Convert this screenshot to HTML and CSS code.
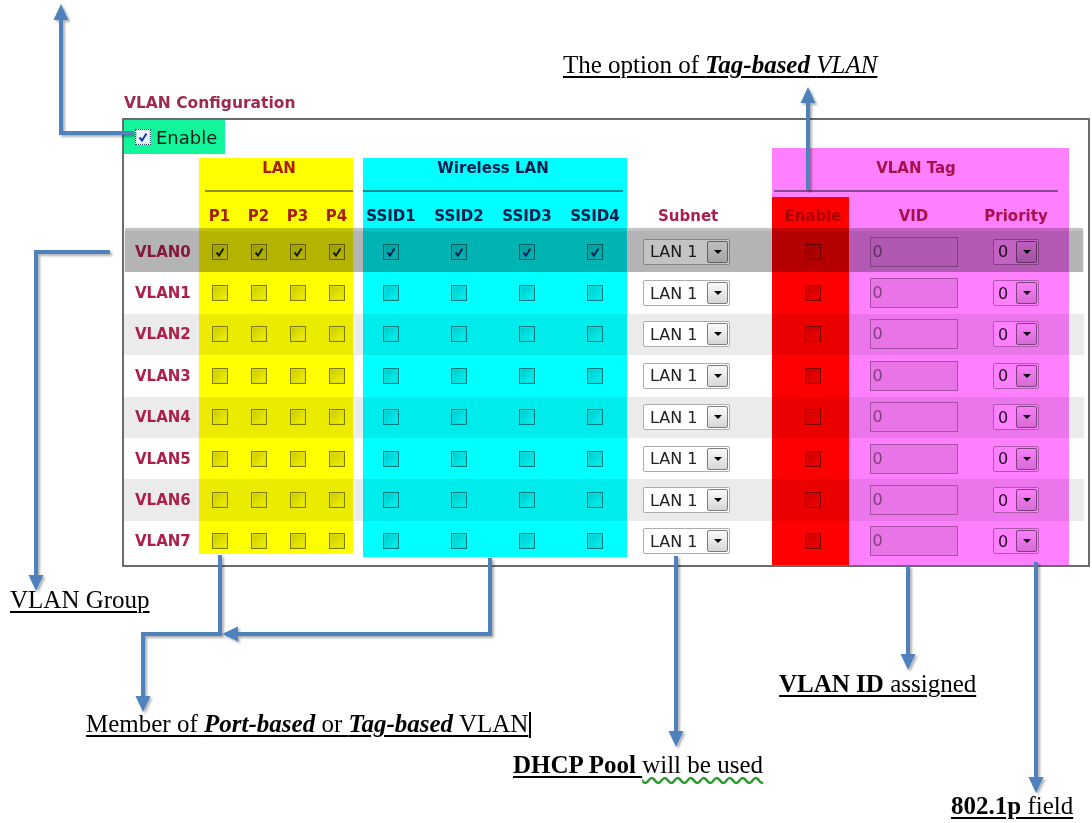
FILE: index.html
```html
<!DOCTYPE html>
<html lang="en">
<head>
<meta charset="UTF-8" />
<title>VLAN Configuration</title>
<link rel="stylesheet" href="styles.css">
</head>
<body>
<div class="page">

  <div class="title">VLAN Configuration</div>

  <div class="panel">
    <div class="enable-row">
      <label class="enable"><span class="cb on focus"><svg viewBox="0 0 14 14"><path d="M3.5 7.5 L6 10.5 L10.5 3.5"/></svg></span>Enable</label>
    </div>

    <div class="row group-row">
      <div class="grp g-lan">LAN</div>
      <div class="grp g-wlan">Wireless LAN</div>
      <div class="grp g-tag">VLAN Tag</div>
    </div>

    <div class="row head-row">
      <div></div>
      <div>P1</div>
      <div>P2</div>
      <div>P3</div>
      <div>P4</div>
      <div></div>
      <div>SSID1</div>
      <div>SSID2</div>
      <div>SSID3</div>
      <div>SSID4</div>
      <div class="subnet-h">Subnet</div>
      <div>Enable</div>
      <div>VID</div>
      <div>Priority</div>
      <div></div>
    </div>

    <div id="rows"></div>

    <!-- highlighter marks drawn over the form -->
    <div class="mark mark-sel"></div>
    <div class="mark mark-lan"></div>
    <div class="mark mark-wlan"></div>
    <div class="mark mark-tag"></div>
    <div class="mark mark-tagen"></div>
  </div>

  <div class="note n-option">The option of <b><i>Tag-based</i></b> <i>VLAN</i></div>
  <div class="note n-group">VLAN Group</div>
  <div class="note n-member">Member of <b><i>Port-based</i></b> or <b><i>Tag-based</i></b> VLAN<span class="caret"></span></div>
  <div class="note plain n-dhcp"><b class="ul">DHCP Pool </b><span class="wavy">will be used</span></div>
  <div class="note n-vid"><b>VLAN ID</b> assigned</div>
  <div class="note n-prio"><b>802.1p</b> field</div>

  <svg class="arrows" width="1092" height="823" viewBox="0 0 1092 823">
    <defs>
      <filter id="sh" x="-20%" y="-20%" width="140%" height="140%">
        <feDropShadow dx="2" dy="2" stdDeviation="1" flood-color="#000" flood-opacity="0.3"/>
      </filter>
    </defs>
    <g filter="url(#sh)">
      <path class="ln" d="M134 133 H61 V19"/>
      <polygon class="hd" points="53.5,20 68.5,20 61,4"/>

      <path class="ln" d="M808 190 V102"/>
      <polygon class="hd" points="800.5,103 815.5,103 808,87"/>

      <path class="ln" d="M110 252 H36 V576"/>
      <polygon class="hd" points="28.5,575 43.5,575 36,591"/>

      <path class="ln" d="M220 555 V634 H143 V697"/>
      <polygon class="hd" points="135.5,696 150.5,696 143,712"/>

      <path class="ln" d="M490 558 V634 H237"/>
      <polygon class="hd" points="238,626.5 238,641.5 222,634"/>

      <path class="ln" d="M676 556 V732"/>
      <polygon class="hd" points="668.5,731 683.5,731 676,747"/>

      <path class="ln" d="M908 566 V655"/>
      <polygon class="hd" points="900.5,654 915.5,654 908,670"/>

      <path class="ln" d="M1036 562 V778"/>
      <polygon class="hd" points="1028.5,777 1043.5,777 1036,793"/>
    </g>
  </svg>

</div>

<script>
  const check = '<svg viewBox="0 0 14 14"><path d="M3.5 7.5 L6 10.5 L10.5 3.5"/></svg>';

  function box(on) {
    return `<div class="c"><span class="cb${on ? ' on' : ''}">${on ? check : ''}</span></div>`;
  }

  const rows = document.getElementById('rows');
  for (let i = 0; i < 8; i++) {
    const on = i === 0;
    let html = `<div class="lbl">VLAN${i}</div>`;
    for (let p = 0; p < 4; p++) html += box(on);
    html += '<div></div>';
    for (let s = 0; s < 4; s++) html += box(on);
    html += '<div><span class="sel subnet">LAN 1<span class="btn"></span></span></div>';
    html += box(false);
    html += '<div class="c"><span class="vid">0</span></div>';
    html += '<div class="c"><span class="sel prio">0<span class="btn"></span></span></div>';
    html += '<div></div>';

    const tr = document.createElement('div');
    tr.className = 'row vrow';
    tr.innerHTML = html;
    rows.appendChild(tr);
  }
</script>

</body>
</html>
```

FILE: styles.css
```css
body {
  margin: 0;
  background: #fff;
  font-family: "DejaVu Sans", Verdana, sans-serif;
}
.page {
  position: relative;
  width: 1092px;
  height: 823px;
  overflow: hidden;
}
.title {
  margin: 94px 0 6px 124px;
  font-size: 15.5px;
  line-height: 18px;
  font-weight: bold;
  color: #9c2a50;
}
.panel {
  position: relative;
  margin-left: 122px;
  width: 960px;
  padding: 0 4px 3px 0;
  border: 2px solid #6b6b6b;
}

/* enable switch */
.enable-row {
  height: 34px;
}
.enable {
  display: flex;
  align-items: center;
  gap: 5px;
  width: 101px;
  height: 34px;
  padding-left: 11px;
  box-sizing: border-box;
  background: #12f59a;
  font-size: 18px;
  color: #0d1f16;
}

/* grid rows */
.row {
  display: grid;
  grid-template-columns: 76px repeat(4, 39px) 1px repeat(4, 68px) 149px 70px 131px 74px 31px;
  font-size: 15px;
  font-weight: bold;
  color: #a81f4c;
}
.group-row {
  height: 38px;
}
.grp {
  height: 38px;
  box-sizing: border-box;
  padding-top: 5px;
  line-height: 18px;
  text-align: center;
  border-bottom: 2px solid #8e8e8e;
}
.g-lan {
  grid-column: 2 / 6;
  margin: 0 3px 0 5px;
}
.g-wlan {
  grid-column: 7 / 11;
  margin: 0 6px 0 6px;
}
.g-tag {
  grid-column: 12 / 15;
  margin: 0 -5px 0 -4px;
}
.head-row {
  height: 39px;
  align-items: end;
  text-align: center;
  line-height: 18px;
}
.head-row div {
  padding-bottom: 6px;
}
.head-row .subnet-h {
  text-align: left;
  padding-left: 29px;
}
.vrow {
  height: 41.4px;
  align-items: center;
}
.vrow:nth-child(odd) {
  background: #ebebeb;
}
.lbl {
  padding-left: 11px;
  color: #ad1f4b;
}
.c {
  display: flex;
  justify-content: center;
}

/* form controls */
.cb {
  display: inline-block;
  width: 16px;
  height: 16px;
  box-sizing: border-box;
  border: 1px solid #7b7b7b;
  background: linear-gradient(135deg, #c8c8c8, #f4f4f4);
  box-shadow: inset 0 0 0 1px #dedede;
}
.cb svg {
  display: block;
  width: 14px;
  height: 14px;
}
.cb path {
  fill: none;
  stroke: #1b2a6e;
  stroke-width: 2;
}
.cb.focus {
  border: 1px dotted #2f4a6a;
  background: #e9f5ff;
}
.cb.focus path {
  stroke: #1736a8;
}
.sel {
  display: flex;
  align-items: center;
  height: 26px;
  box-sizing: border-box;
  border: 1px solid #adadad;
  border-radius: 2px;
  background: #fff;
  font-size: 16px;
  font-weight: normal;
  color: #222;
}
.sel.subnet {
  width: 87px;
  margin-left: 14px;
  padding-left: 6px;
}
.sel.prio {
  width: 46px;
  padding-left: 4px;
}
.btn {
  display: flex;
  align-items: center;
  justify-content: center;
  margin-left: auto;
  margin-right: 1px;
  width: 21px;
  height: 22px;
  box-sizing: border-box;
  border: 1px solid #7d7d7d;
  border-radius: 2px;
  background: linear-gradient(#fbfbfb, #d6d6d6);
}
.btn::after {
  content: "";
  border-left: 4px solid transparent;
  border-right: 4px solid transparent;
  border-top: 4px solid #000;
}
.vid {
  width: 88px;
  height: 30px;
  box-sizing: border-box;
  padding-left: 2px;
  border: 1px solid #a6a6a6;
  background: #e8e8e8;
  font-size: 16px;
  font-weight: normal;
  line-height: 28px;
  color: #7f7f7f;
}

/* highlighter marks */
.mark {
  position: absolute;
  mix-blend-mode: multiply;
  pointer-events: none;
}
.mark-sel {
  left: 1px;
  top: 108px;
  width: 958px;
  height: 44px;
  background: #c3c3c3;
}
.mark-lan {
  left: 75px;
  top: 38px;
  width: 154px;
  height: 396px;
  background: #ffff00;
}
.mark-wlan {
  left: 239px;
  top: 38px;
  width: 264px;
  height: 399px;
  background: #00ffff;
}
.mark-tag {
  left: 648px;
  top: 28px;
  width: 297px;
  bottom: 0;
  background: #ff80ff;
}
.mark-tagen {
  left: 648px;
  top: 77px;
  width: 77px;
  bottom: 0;
  background: #ff0000;
}

/* callouts */
.note {
  position: absolute;
  font-family: "Liberation Serif", "Times New Roman", serif;
  font-size: 25px;
  line-height: 30px;
  color: #000;
  white-space: nowrap;
  text-decoration: underline;
  text-decoration-thickness: 2px;
  text-underline-offset: 3px;
}
.note.plain {
  text-decoration: none;
}
.ul {
  text-decoration: underline;
  text-decoration-thickness: 2px;
  text-underline-offset: 3px;
}
.wavy {
  text-decoration: underline wavy #2a9a2a;
  text-underline-offset: 3px;
}
.caret {
  display: inline-block;
  width: 2px;
  height: 26px;
  margin-left: 1px;
  vertical-align: -6px;
  background: #000;
}
.n-option { left: 563px; top: 50px; }
.n-group { left: 10px; top: 585px; }
.n-member { left: 86px; top: 709px; }
.n-dhcp { left: 513px; top: 750px; }
.n-vid { left: 779px; top: 669px; }
.n-prio { left: 951px; top: 791px; }

.arrows {
  position: absolute;
  left: 0;
  top: 0;
  pointer-events: none;
}
.ln {
  fill: none;
  stroke: #4f81bd;
  stroke-width: 4;
}
.hd {
  fill: #4f81bd;
}
```
